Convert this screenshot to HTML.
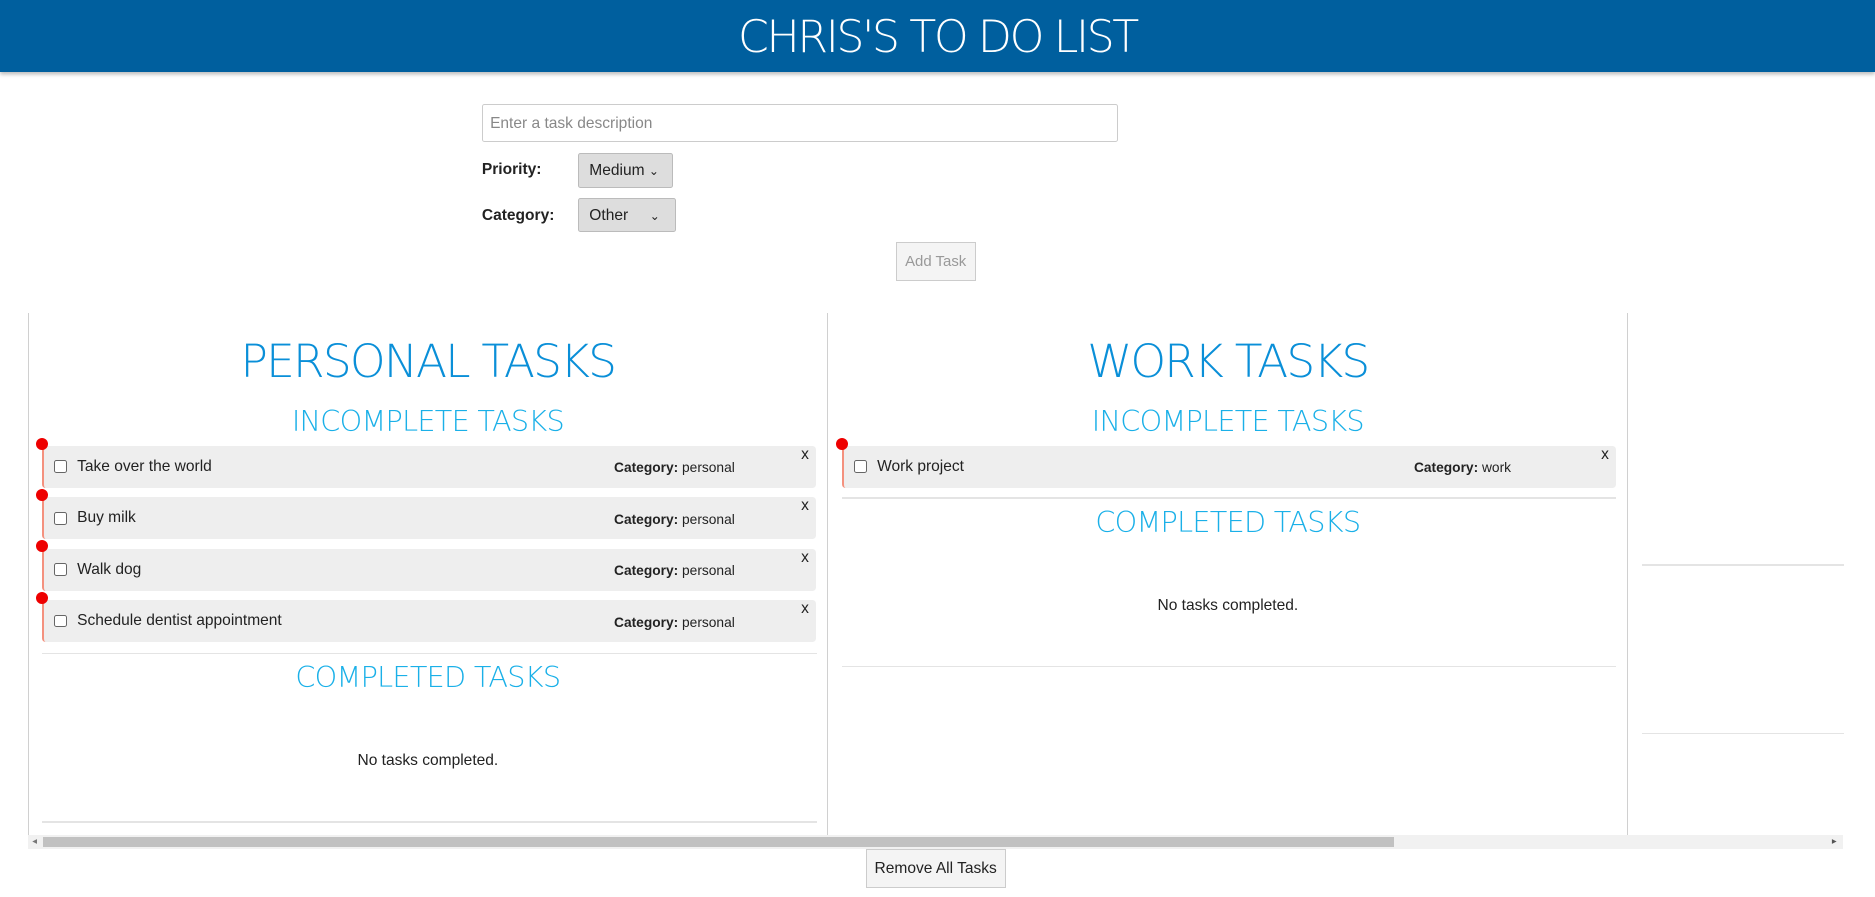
<!DOCTYPE html>
<html><head><meta charset="utf-8"><style>
html,body{margin:0;padding:0;background:#fff;overflow:hidden}
#w{zoom:1.19578;width:1568px;height:750px;position:relative;font-family:"Liberation Sans",sans-serif;color:#222}
.a{position:absolute}
.thin{font-family:"DejaVu Sans ExtraLight","DejaVu Sans","Liberation Sans",sans-serif;font-weight:200}
#hd{left:0;top:0;width:1568px;height:60px;background:#005f9e;box-shadow:0 2px 3px rgba(0,0,0,.25);color:#fff;text-align:center;font-size:37px;line-height:64px;letter-spacing:-2px}
.sel{background:#ddd;border:1px solid #bbb;border-radius:2px;font-size:13px;line-height:28px;padding-left:9px;box-sizing:border-box}
.lbl{font-size:13px;font-weight:bold}
.col{top:262px;height:436px;width:668px;border-left:1px solid #d0d0d0}
.h1{width:100%;text-align:center;color:#0a8fd8;font-size:38px;letter-spacing:-1.5px}
.h2{width:100%;text-align:center;color:#1ab0e8;font-size:24px;letter-spacing:-0.6px}
.card{height:35px;width:646px;background:#eee;border-left:2px solid #f4917e;border-radius:3px}
.dot{width:10px;height:10px;border-radius:50%;background:#e00;left:-6px;top:-7px}
.cb{width:9px;height:9px;border:1px solid #666;border-radius:2px;left:9px;top:12px;background:#fff}
.t{left:28px;top:10px;font-size:13px}
.c{left:477px;top:12px;font-size:11.5px}
.x{right:6px;top:0px;font-size:13px}
.hr{height:1px;background:#e4e4e4}
.nt{width:100%;text-align:center;font-size:13px}
</style></head><body><div id="w">
<div id="hd" class="a thin">CHRIS'S TO DO LIST</div>
<div class="a" style="left:403px;top:87px;width:532px;height:32px;border:1px solid #ccc;box-sizing:border-box;border-radius:2px;font-size:13px;color:#888;padding:8px 6px">Enter a task description</div>
<div class="a lbl" style="left:403px;top:135px">Priority:</div>
<div class="a sel" style="left:483px;top:128px;width:80px;height:29px">Medium <span style="font-size:10px">⌄</span></div>
<div class="a lbl" style="left:403px;top:173px">Category:</div>
<div class="a sel" style="left:483px;top:166px;width:82px;height:28px">Other &nbsp;&nbsp;&nbsp;&nbsp;<span style="font-size:10px">⌄</span></div>
<div class="a" style="left:749px;top:202px;width:67px;height:33px;border:1px solid #ccc;background:#f4f4f4;box-sizing:border-box;font-size:12.5px;color:#999;text-align:center;line-height:31px">Add Task</div>

<div class="a col" style="left:23px">
 <div class="a h1 thin" style="top:18px">PERSONAL TASKS</div>
 <div class="a h2 thin" style="top:76px">INCOMPLETE TASKS</div>
 <div class="a card" style="left:11px;top:111px"><div class="a dot"></div><div class="a cb"></div><div class="a t">Take over the world</div><div class="a c"><b>Category:</b> personal</div><div class="a x">x</div></div>
 <div class="a card" style="left:11px;top:154px"><div class="a dot"></div><div class="a cb"></div><div class="a t">Buy milk</div><div class="a c"><b>Category:</b> personal</div><div class="a x">x</div></div>
 <div class="a card" style="left:11px;top:197px"><div class="a dot"></div><div class="a cb"></div><div class="a t">Walk dog</div><div class="a c"><b>Category:</b> personal</div><div class="a x">x</div></div>
 <div class="a card" style="left:11px;top:240px"><div class="a dot"></div><div class="a cb"></div><div class="a t">Schedule dentist appointment</div><div class="a c"><b>Category:</b> personal</div><div class="a x">x</div></div>
 <div class="a hr" style="left:11px;top:284px;width:648px"></div>
 <div class="a h2 thin" style="top:290px">COMPLETED TASKS</div>
 <div class="a nt" style="top:367px">No tasks completed.</div>
 <div class="a hr" style="left:11px;top:425px;width:648px"></div>
</div>
<div class="a col" style="left:692px">
 <div class="a h1 thin" style="top:18px">WORK TASKS</div>
 <div class="a h2 thin" style="top:76px">INCOMPLETE TASKS</div>
 <div class="a card" style="left:11px;top:111px"><div class="a dot"></div><div class="a cb"></div><div class="a t">Work project</div><div class="a c"><b>Category:</b> work</div><div class="a x">x</div></div>
 <div class="a hr" style="left:11px;top:154px;width:648px"></div>
 <div class="a h2 thin" style="top:160px">COMPLETED TASKS</div>
 <div class="a nt" style="top:237px">No tasks completed.</div>
 <div class="a hr" style="left:11px;top:295px;width:648px"></div>
</div>
<div class="a col" style="left:1361px;width:180px">
 <div class="a hr" style="left:11px;top:210px;width:169px"></div>
 <div class="a hr" style="left:11px;top:351px;width:169px"></div>
</div>
<div class="a" style="left:23px;top:698px;width:1518px;height:12px;background:#f1f1f1"></div>
<div class="a" style="left:36px;top:700px;width:1130px;height:8px;background:#c1c1c1"></div>
<div class="a" style="left:27px;top:699px;font-size:8px;color:#777">◂</div>
<div class="a" style="left:1532px;top:699px;font-size:8px;color:#555">▸</div>
<div class="a" style="left:724px;top:710px;width:117px;height:33px;border:1px solid #ccc;background:#f4f4f4;box-sizing:border-box;font-size:13px;text-align:center;line-height:31px">Remove All Tasks</div>
</div></body></html>
